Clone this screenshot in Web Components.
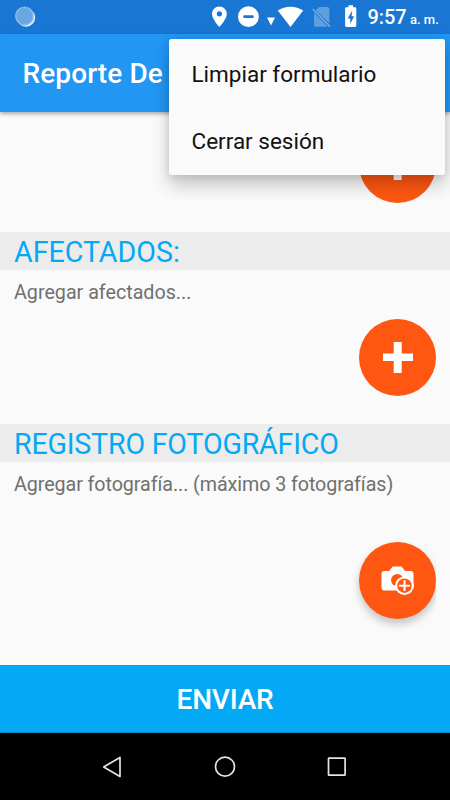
<!DOCTYPE html>
<html lang="es">
<head>
<meta charset="utf-8">
<title>Reporte</title>
<style>
html,body{margin:0;padding:0}
body{width:450px;height:800px;overflow:hidden;background:#fafafa;font-family:Roboto,"Noto Sans",sans-serif}
</style>
</head>
<body>
<report-app></report-app>
<script>
const define = (name, html) => {
  const t = document.createElement('template');
  t.innerHTML = html;
  customElements.define(name, class extends HTMLElement {
    constructor() {
      super();
      this.attachShadow({mode: 'open'}).appendChild(t.content.cloneNode(true));
    }
  });
};

define('status-bar', `
<style>
:host{display:flex;height:34px;flex:none;background:#1976d2;color:#fff}
svg{display:block;flex:none}
.left{margin-left:14px}
.right{margin-left:165px}
.time{flex:none;margin-left:7.500px;font-size:20px;font-weight:500;line-height:35px;white-space:nowrap;letter-spacing:-.1px}
.time small{font-size:13px;letter-spacing:0;margin-left:3.500px}
</style>
<svg class="left" width="24" height="34" viewBox="14 0 24 34">
  <circle cx="26" cy="17.600" r="9.200" fill="#e6f0fa"/>
  <circle cx="24.500" cy="16" r="9.400" fill="#6aa6e2"/>
  <circle cx="24.500" cy="16" r="8.600" fill="none" stroke="#a3c8ed" stroke-width="1.600" stroke-dasharray="1.200 1.300"/>
</svg>
<svg class="right" width="157" height="34" viewBox="203 0 157 34">
  <path fill="#fff" fill-rule="evenodd" d="M219.4 6.4c-4.1 0-7.4 3.3-7.4 7.4 0 5.5 7.4 13.2 7.4 13.2s7.4-7.7 7.4-13.2c0-4.1-3.3-7.4-7.4-7.4zm0 4.8a2.6 2.6 0 1 1 0 5.2 2.6 2.6 0 0 1 0-5.2z"/>
  <circle cx="248.4" cy="16.7" r="10.4" fill="#fff"/>
  <rect x="243.3" y="15.3" width="10.4" height="2.8" rx=".8" fill="#1976d2"/>
  <path d="M267 17.6h8L271 25.4z" fill="#fff"/>
  <path d="M277.8 10.5C285 5.4 296 5.4 303.2 10.5L290.5 27z" fill="#fff"/>
  <path d="M319.2 7h8q2.200 0 2.200 2.200V23.500L315.600 10.300zM314 12.500l13.300 13.800q-.5.5-1.300.5H316q-2 0-2-2z" fill="#5e9fdf"/>
  <path d="M312.700 9L330 26.600" stroke="#75ade4" stroke-width="1.500"/>
  <path fill="#fff" fill-rule="evenodd" d="M348.500 5.300h4.500v2h2q1.300 0 1.300 1.300v17q0 1.300-1.300 1.300h-8.600q-1.300 0-1.300-1.300v-17q0-1.300 1.300-1.300h2.100zM352.300 10.500l-4.700 8h2.700v5.400l3.800-7.700h-2.500z"/>
</svg>
<div class="time">9:57<small>a. m.</small></div>`);

define('app-toolbar', `
<style>
:host{display:flex;align-items:center;height:78px;flex:none;box-sizing:border-box;padding:1px 22.500px 0;background:#2196f3;color:#fff;
 font-size:28px;font-weight:500;letter-spacing:.1px;white-space:nowrap;box-shadow:0 2px 4px rgba(0,0,0,.32);position:relative}
</style><slot></slot>`);

define('section-heading', `
<style>
:host{display:block;height:38px;line-height:40px;padding-left:14px;background:#ececec;color:#03a9f4;font-size:28.600px;white-space:nowrap;letter-spacing:var(--track,0)}
</style><slot></slot>`);

define('hint-text', `
<style>
:host{display:block;height:49px;line-height:45px;padding-left:14px;color:#707070;font-size:19.700px;white-space:nowrap;letter-spacing:var(--track,0)}
</style><slot></slot>`);

define('round-button', `
<style>
:host{display:flex;justify-content:flex-end;padding-right:14px}
span{display:flex;width:77px;height:77px;border-radius:50%;background:#ff5712}
:host([raised]){overflow:hidden;padding:0;margin-right:14px;height:100px}
:host([raised]) span{box-shadow:0 5px 9px rgba(0,0,0,.22)}
</style><span><slot></slot></span>`);

define('plus-icon', `
<style>:host,svg{display:block}</style>
<svg width="77" height="77" viewBox="0 0 77 77"><path d="M34.700 23h8v11.500h11.300v7.500h-11.300v12h-8v-12h-10.700v-7.500h10.700z" fill="#fff"/></svg>`);

define('camera-icon', `
<style>:host,svg{display:block}</style>
<svg width="77" height="77" viewBox="0 0 77 77">
 <path d="M22.500 32q0-3 3-3h4.600l3.600-4.500h8.800l3.500 4.500h5.500q3 0 3 3v13.500q-1 3-4 3H25.500q-3 0-3-3z" fill="#fff"/>
 <circle cx="38.300" cy="38.200" r="6.200" fill="#ff5712"/>
 <circle cx="45.500" cy="43.700" r="9.300" fill="#fff"/>
 <circle cx="45.500" cy="43.700" r="7.200" fill="#ff5712"/>
 <path d="M45.500 38.300v10.800M40.100 43.700h10.800" stroke="#fff" stroke-width="2"/>
</svg>`);

define('submit-bar', `
<style>
:host{display:flex;justify-content:center;height:68px;flex:none;box-sizing:border-box;background:#03a9f4;color:#fff;font-size:28px;font-weight:500;line-height:69px;border-bottom:1px solid #0489c9;letter-spacing:-.2px}
</style><slot></slot>`);

define('nav-bar', `
<style>
:host{display:flex;justify-content:space-between;align-items:center;height:67px;flex:none;box-sizing:border-box;padding:0 102px 0 101px;background:#000}
svg{display:block;fill:none;stroke:#e4e4e4;stroke-width:1.700}
</style>
<svg width="22" height="22"><path d="M2.700 10.900L19 1.400v19z" stroke-linejoin="round"/></svg>
<svg width="22" height="22"><circle cx="11" cy="10.700" r="9.500"/></svg>
<svg width="22" height="22"><rect x="2.500" y="2.200" width="16.600" height="17" rx=".5"/></svg>`);

define('menu-item', `
<style>
:host{display:flex;align-items:center;box-sizing:border-box;height:67.500px;padding:2px 0 0 23px;font-size:22.500px;color:#111;white-space:nowrap}
</style><slot></slot>`);

define('overflow-menu', `
<style>
:host{display:block;position:absolute;left:168.500px;top:39px;width:276px;height:135.500px;border-radius:2.500px;background:#fafafa;box-shadow:0 11px 18px rgba(0,0,0,.2),0 1px 8px rgba(0,0,0,.12)}
</style><slot></slot>`);

define('report-app', `
<style>
:host{display:flex;flex-direction:column;width:450px;height:800px;position:relative;background:#fafafa}
main{flex:1;min-height:0;overflow:hidden;display:flex;flex-direction:column}
.first{padding-top:14px;height:105.500px}
section{height:192px;flex:none}
section.last round-button{margin-top:31.500px}
section.last section-heading{--track:-.2px}
section.last hint-text{--track:-.07px}
</style>
<status-bar></status-bar>
<app-toolbar>Reporte De</app-toolbar>
<main>
 <div class="first"><round-button><plus-icon></plus-icon></round-button></div>
 <section>
  <section-heading>AFECTADOS:</section-heading>
  <hint-text>Agregar afectados...</hint-text>
  <round-button><plus-icon></plus-icon></round-button>
 </section>
 <section class="last">
  <section-heading>REGISTRO FOTOGRÁFICO</section-heading>
  <hint-text>Agregar fotografía... (máximo 3 fotografías)</hint-text>
  <round-button raised><camera-icon></camera-icon></round-button>
 </section>
</main>
<submit-bar>ENVIAR</submit-bar>
<nav-bar></nav-bar>
<overflow-menu>
 <menu-item>Limpiar formulario</menu-item>
 <menu-item>Cerrar sesión</menu-item>
</overflow-menu>`);
</script>
</body>
</html>
